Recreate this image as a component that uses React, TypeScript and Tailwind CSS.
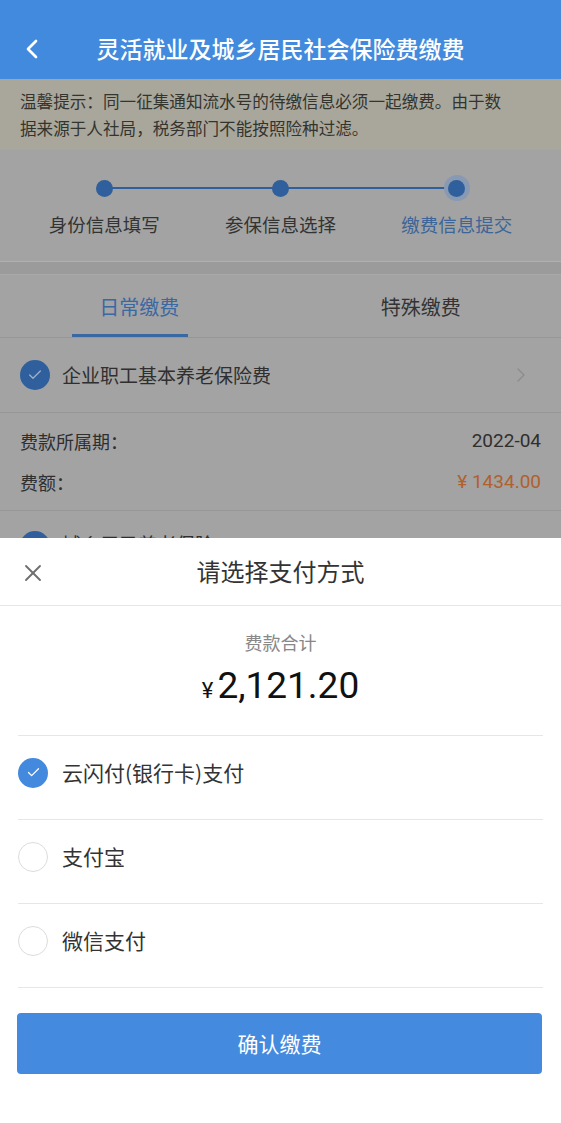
import { ChevronLeft, ChevronRight, X, Check } from "lucide-react";

const font = { fontFamily: '"Noto Sans CJK SC", "Noto Sans", sans-serif' };
const numFont = { fontFamily: '"Roboto", "Noto Sans CJK SC", sans-serif' };

const steps = [
  { label: "身份信息填写", active: false },
  { label: "参保信息选择", active: false },
  { label: "缴费信息提交", active: true },
];

const payMethods = [
  { name: "云闪付(银行卡)支付", checked: true },
  { name: "支付宝", checked: false },
  { name: "微信支付", checked: false },
];

export default function App() {
  return (
    <div className="w-[561px] h-[1123px] overflow-hidden bg-white flex flex-col" style={font}>
      {/* 顶部导航 */}
      <header className="h-[79px] shrink-0 bg-[#418add] flex items-center pt-[18px] px-5 text-white">
        <ChevronLeft className="w-8 h-8 -ml-1" strokeWidth={2} />
        <h1 className="flex-1 text-center text-[23px] font-medium leading-none pr-[28px]">
          灵活就业及城乡居民社会保险费缴费
        </h1>
      </header>

      {/* 被遮罩的页面内容 */}
      <div className="h-[459px] shrink-0 overflow-hidden bg-[#a3a3a3]">
        <div className="bg-[#a9a79c] h-[71px] pl-5 pr-[52px] pt-[9px] text-[16.6px] leading-[27px] text-[#34342f]">
          温馨提示：同一征集通知流水号的待缴信息必须一起缴费。由于数据来源于人社局，税务部门不能按照险种过滤。
        </div>

        <div className="h-[112px] px-4 pt-[29px] border-b border-[#b0b0b0]">
          <div className="relative grid grid-cols-3">
            <div className="absolute left-[88px] right-[88px] top-[8px] h-[2px] bg-[#2f5f9c]" />
            {steps.map((s) => (
              <div key={s.label} className="flex flex-col items-center">
                <div className="relative z-10 w-[18px] h-[18px] flex items-center justify-center">
                  {s.active && <span className="absolute w-[26px] h-[26px] rounded-full bg-[#8799b3]" />}
                  <span className="relative w-[17px] h-[17px] rounded-full bg-[#2f5f9c]" />
                </div>
                <span
                  className={`mt-[15px] text-[18.5px] leading-[24px] ${s.active ? "text-[#3d6597]" : "text-[#333]"}`}
                >
                  {s.label}
                </span>
              </div>
            ))}
          </div>
        </div>
        <div className="h-[13px] bg-[#9b9b9b] border-b border-[#a8a8a8]" />

        <div className="h-[63px] grid grid-cols-2 border-b border-[#969696]">
          <div className="relative flex items-center justify-center pt-[1px]">
            <span className="text-[20px] text-[#3a68a3] -ml-[2px]">日常缴费</span>
            <span className="absolute bottom-0 left-[72px] w-[116px] h-[3px] bg-[#3a68a3]" />
          </div>
          <div className="flex items-center justify-center pt-[1px]">
            <span className="text-[20px] text-[#333]">特殊缴费</span>
          </div>
        </div>

        <div className="h-[75px] flex items-center pl-[20px] pr-[28px] border-b border-[#979797]">
          <span className="w-[30px] h-[30px] rounded-full bg-[#2f5f9c] flex items-center justify-center">
            <Check className="w-[16px] h-[16px] text-[#9fb0c6]" strokeWidth={2} />
          </span>
          <span className="ml-[12px] text-[19px] text-[#2f2f2f] flex-1">企业职工基本养老保险费</span>
          <ChevronRight className="w-[24px] h-[24px] text-[#8e8e8e]" strokeWidth={1.5} />
        </div>

        <div className="h-[98px] px-5 pt-[14px] text-[18px] border-b border-[#979797]">
          <div className="flex justify-between leading-[28px] text-[#2f2f2f]">
            <span>费款所属期：</span>
            <span className="text-[19px]" style={numFont}>2022-04</span>
          </div>
          <div className="flex justify-between leading-[28px] mt-[13px]">
            <span className="text-[#2f2f2f]">费额：</span>
            <span className="text-[19px] text-[#b1602e]" style={numFont}>¥ 1434.00</span>
          </div>
        </div>

        <div className="h-[40px] flex items-start pl-[20px] pt-[20px]">
          <span className="w-[30px] h-[30px] rounded-full bg-[#2f5f9c]" />
          <span className="ml-[12px] text-[19px] leading-[26px] text-[#2f2f2f]">城乡居民养老保险</span>
        </div>
      </div>

      {/* 支付方式弹层 */}
      <div className="flex-1 bg-white">
        <div className="h-[68px] relative flex items-center justify-center border-b border-[#e6e6e6]">
          <X className="absolute left-[19px] top-[21px] w-[28px] h-[28px] text-[#6f6f6f]" strokeWidth={1.6} />
          <span className="text-[24px] text-[#333] -mt-[2px]">请选择支付方式</span>
        </div>

        <div className="mx-[18px] h-[130px] flex flex-col items-center border-b border-[#e6e6e6]">
          <span className="mt-[23px] text-[18px] leading-[26px] text-[#888]">费款合计</span>
          <div className="mt-[8px] flex items-baseline text-[#111]" style={numFont}>
            <span className="text-[22px] mr-[4px]">¥</span>
            <span className="text-[37px] leading-[46px]">2,121.20</span>
          </div>
        </div>

        <div className="mx-[18px]">
          {payMethods.map((m) => (
            <div key={m.name} className="h-[84px] flex items-center pb-[10px] border-b border-[#e6e6e6]">
              {m.checked ? (
                <span className="w-[30px] h-[30px] rounded-full bg-[#4389dd] flex items-center justify-center">
                  <Check className="w-[15px] h-[15px] text-white" strokeWidth={2} />
                </span>
              ) : (
                <span className="w-[30px] h-[30px] rounded-full border-[1.5px] border-[#dcdcdc]" />
              )}
              <span className="ml-[14px] text-[21px] text-[#333]">{m.name}</span>
            </div>
          ))}
        </div>

        <button className="mt-[25px] mx-[17px] w-[525px] h-[61px] rounded-[4px] bg-[#448ade] text-white text-[21px]">
          确认缴费
        </button>
      </div>
    </div>
  );
}
